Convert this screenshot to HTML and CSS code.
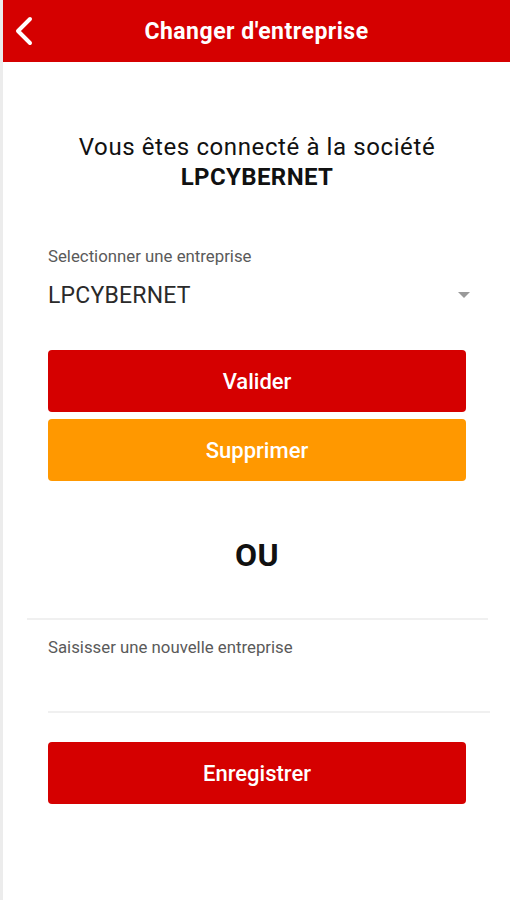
FILE: index.html
```html
<!DOCTYPE html>
<html lang="fr">
<head>
<meta charset="utf-8">
<link rel="stylesheet" href="styles.css">
</head>
<body>
<div class="app">
  <header class="topbar">
    <span class="back">
      <svg width="22" height="30" viewBox="0 0 22 30"><path d="M17 3 L5 15 L17 27" fill="none" stroke="#fff" stroke-width="4" stroke-linecap="round" stroke-linejoin="round"/></svg>
    </span>
    <h1 class="title">Changer d'entreprise</h1>
  </header>
  <main class="content">
    <p class="connected">Vous êtes connecté à la société<br><strong>LPCYBERNET</strong></p>
    <div class="field">
      <label class="label">Selectionner une entreprise</label>
      <div class="select">
        <span>LPCYBERNET</span>
        <span class="caret"></span>
      </div>
    </div>
    <div class="btn red first">Valider</div>
    <div class="btn orange">Supprimer</div>
    <div class="ou">OU</div>
    <div class="divider wide"></div>
    <div class="field2">
      <label class="label">Saisisser une nouvelle entreprise</label>
      <div class="input"></div>
      <div class="divider"></div>
    </div>
    <div class="btn red save">Enregistrer</div>
  </main>
</div>
</body>
</html>
```

FILE: styles.css
```css
* { box-sizing: border-box; }
html, body { margin: 0; padding: 0; }
body {
  width: 510px;
  height: 900px;
  background: #fff;
  font-family: Roboto, "Liberation Sans", sans-serif;
  border-left: 3px solid #ececec;
}
.app { width: 507px; }
.topbar {
  position: relative;
  height: 62px;
  background: #d50000;
  display: flex;
  align-items: center;
  justify-content: center;
}
.back {
  position: absolute;
  left: 10px;
  top: 16px;
}
.title {
  margin: 0;
  color: #fff;
  font-size: 23px;
  font-weight: 700;
  letter-spacing: 0.5px;
}
.content {
  padding: 0 44px 0 45px;
}
.connected {
  margin: 70px 0 0;
  text-align: center;
  font-size: 24px;
  letter-spacing: 0.6px;
  line-height: 30px;
  color: #111;
}
.connected strong { font-weight: 700; letter-spacing: 0.4px; }
.field { margin-top: 55px; }
.label {
  display: block;
  font-size: 16.8px;
  color: #5a5a5a;
  line-height: 18px;
}
.select {
  margin-top: 16px;
  display: flex;
  justify-content: space-between;
  align-items: center;
  font-size: 23px;
  letter-spacing: 0.2px;
  color: #2a2a2a;
  height: 28px;
}
.caret {
  width: 0; height: 0;
  border-left: 6px solid transparent;
  border-right: 6px solid transparent;
  border-top: 6px solid #9a9a9a;
  margin-right: -4px;
}
.btn {
  height: 62px;
  border-radius: 4px;
  display: flex;
  align-items: center;
  justify-content: center;
  color: #fff;
  font-size: 22px;
  font-weight: 500;
}
.red { background: #d50000; }
.orange { background: #ff9800; margin-top: 7px; }
.first { margin-top: 41px; }
.ou {
  margin-top: 54px;
  text-align: center;
  font-size: 32px;
  font-weight: 700;
  letter-spacing: 0.5px;
  color: #111;
  line-height: 40px;
}
.divider { height: 2px; background: #f0f0f0; }
.wide { margin: 43px -22px 0 -21px; }
.field2 { margin-top: 18px; }
.input { height: 55px; }
.field2 .divider { margin-right: -24px; }
.save { margin-top: 29px; }
```
